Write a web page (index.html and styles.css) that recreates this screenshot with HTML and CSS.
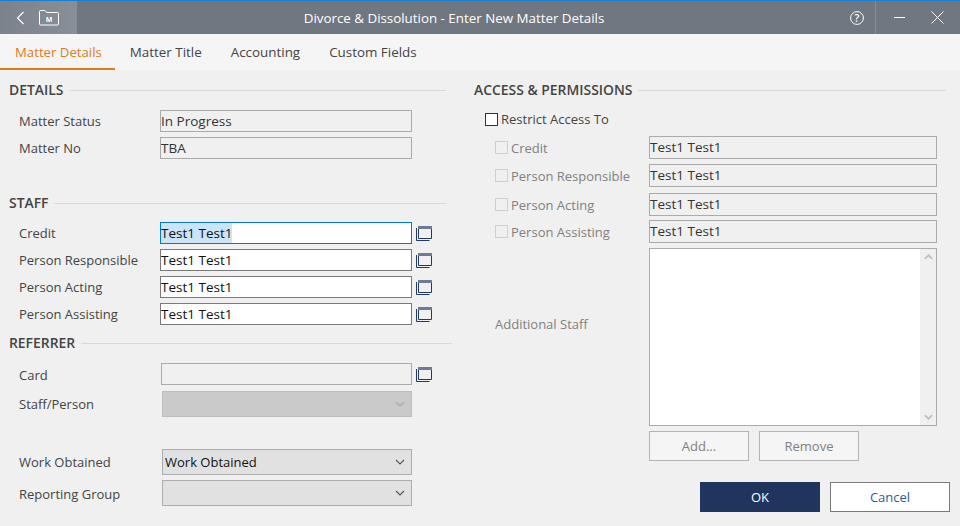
FILE: index.html
```html
<!DOCTYPE html>
<html lang="en">
<head>
    <meta charset="UTF-8">
    <meta name="viewport" content="width=device-width, initial-scale=1.0">
    <title>Divorce &amp; Dissolution - Enter New Matter Details</title>
    <link rel="stylesheet" href="styles.css">
</head>
<body>
    <svg class="defs" width="0" height="0">
        <symbol id="popup" viewBox="0 0 16 16">
            <path d="M2.5 1.5h13v12h-13z" fill="none" stroke="#1f3864"/>
            <path d="M2 1h14v3H2z" fill="#6d7b99"/>
            <path d="M.5 3v12.5h13" fill="none" stroke="#1f3864"/>
        </symbol>
        <symbol id="chev" viewBox="0 0 10 6">
            <path d="M1 1l4 4 4-4" fill="none" stroke="currentColor"/>
        </symbol>
    </svg>

    <header class="titlebar">
        <div class="nav">
            <svg class="back" width="9" height="14" viewBox="0 0 9 14"><path d="M7.5 1L1.5 7l6 6" fill="none" stroke="#fff" stroke-width="1.2"/></svg>
            <svg class="folder" width="20" height="16" viewBox="0 0 20 16">
                <path d="M.5 14V1.5a1 1 0 0 1 1-1h4.5l1.5 2h11a1 1 0 0 1 1 1V14a1 1 0 0 1-1 1h-17a1 1 0 0 1-1-1z" fill="none" stroke="#fff"/>
                <text x="10" y="12" text-anchor="middle" class="folder-m">M</text>
            </svg>
        </div>
        <div class="title">Divorce &amp; Dissolution - Enter New Matter Details</div>
        <div class="help">
            <svg width="14" height="14" viewBox="0 0 14 14">
                <circle cx="7" cy="7" r="6.4" fill="none" stroke="#fff"/>
                <text x="7" y="10.5" text-anchor="middle" class="help-q">?</text>
            </svg>
        </div>
        <div class="winbtns">
            <svg width="11" height="1" viewBox="0 0 11 1"><path d="M0 0h11v1H0z" fill="#fff"/></svg>
            <svg width="13" height="13" viewBox="0 0 13 13"><path d="M.5.5l12 12M12.5.5l-12 12" stroke="#fff" fill="none"/></svg>
        </div>
    </header>

    <nav class="tabs">
        <a class="tab active">Matter Details</a>
        <a class="tab">Matter Title</a>
        <a class="tab">Accounting</a>
        <a class="tab">Custom Fields</a>
    </nav>

    <main class="content">
        <div class="col-left">
            <h2 class="heading">DETAILS</h2>
            <div class="rows rows-details">
                <div class="row"><label>Matter Status</label><div class="field readonly">In Progress</div></div>
                <div class="row"><label>Matter No</label><div class="field readonly">TBA</div></div>
            </div>

            <h2 class="heading heading-staff">STAFF</h2>
            <div class="rows rows-staff">
                <div class="row"><label>Credit</label><div class="field focus"><span class="sel">Test1 Test1</span></div><svg class="pick"><use href="#popup"/></svg></div>
                <div class="row"><label>Person Responsible</label><div class="field">Test1 Test1</div><svg class="pick"><use href="#popup"/></svg></div>
                <div class="row"><label>Person Acting</label><div class="field">Test1 Test1</div><svg class="pick"><use href="#popup"/></svg></div>
                <div class="row"><label>Person Assisting</label><div class="field">Test1 Test1</div><svg class="pick"><use href="#popup"/></svg></div>
            </div>

            <h2 class="heading heading-ref">REFERRER</h2>
            <div class="row row-card"><label>Card</label><div class="field readonly card"></div><svg class="pick"><use href="#popup"/></svg></div>
            <div class="row row-select row-person"><label>Staff/Person</label><div class="select disabled"><span></span><svg class="caret"><use href="#chev"/></svg></div></div>
            <div class="row row-select row-work"><label>Work Obtained</label><div class="select"><span>Work Obtained</span><svg class="caret"><use href="#chev"/></svg></div></div>
            <div class="row row-select row-group"><label>Reporting Group</label><div class="select"><span></span><svg class="caret"><use href="#chev"/></svg></div></div>
        </div>

        <div class="col-right">
            <h2 class="heading">ACCESS &amp; PERMISSIONS</h2>
            <div class="restrict"><span class="check"></span>Restrict Access To</div>
            <div class="access-rows">
                <div class="access"><label><span class="check off"></span>Credit</label><div class="field readonly">Test1 Test1</div></div>
                <div class="access"><label><span class="check off"></span>Person Responsible</label><div class="field readonly">Test1 Test1</div></div>
                <div class="access tall"><label><span class="check off"></span>Person Acting</label><div class="field readonly">Test1 Test1</div></div>
                <div class="access"><label><span class="check off"></span>Person Assisting</label><div class="field readonly">Test1 Test1</div></div>
            </div>
            <div class="additional">
                <label>Additional Staff</label>
                <div class="listbox">
                    <div class="scroll">
                        <svg class="up"><use href="#chev"/></svg>
                        <svg class="down"><use href="#chev"/></svg>
                    </div>
                </div>
            </div>
            <div class="list-btns">
                <button class="btn-small">Add...</button>
                <button class="btn-small">Remove</button>
            </div>
            <div class="actions">
                <button class="btn primary">OK</button>
                <button class="btn">Cancel</button>
            </div>
        </div>
    </main>
</body>
</html>
```

FILE: styles.css
```css
* {
    box-sizing: border-box;
}
html, body {
    margin: 0;
    height: 526px;
    overflow: hidden;
}
body {
    font-family: "Open Sans", "Noto Sans", sans-serif;
    font-size: 13px;
    color: #444;
    background-color: #f0f0f0;
}
.defs {
    display: block;
    height: 0;
}

/* title bar */
.titlebar {
    height: 34px;
    display: flex;
    align-items: center;
    background-color: #6f7780;
    border-top: 1px solid #1a7fd0;
    color: white;
}
.nav {
    width: 77px;
    height: 33px;
    display: flex;
    align-items: center;
    padding-left: 16px;
    gap: 14px;
    background: linear-gradient(to right, #7b828b, #888f97);
}
.folder-m {
    font-size: 7px;
    font-weight: bold;
    fill: white;
}
.title {
    flex: 1;
    text-align: center;
    font-size: 13.35px;
    padding-right: 19px;
}
.help {
    width: 25px;
    height: 33px;
    display: flex;
    align-items: center;
}
.help-q {
    font-size: 10.5px;
    font-weight: 600;
    fill: white;
}
.winbtns {
    width: 85px;
    height: 33px;
    display: flex;
    align-items: center;
    padding-left: 18px;
    gap: 26px;
    border-left: 1px solid #858c94;
}

/* tabs */
.tabs {
    height: 36px;
    display: flex;
    background-color: #f5f5f5;
}
.tab {
    padding: 0 14px 0 15px;
    line-height: 36px;
    font-size: 13.4px;
    color: #444;
}
.tab.active {
    padding-right: 13px;
    font-size: 13.2px;
    color: #e07a1f;
    border-bottom: 2px solid #e07a1f;
}

/* form columns */
.content {
    display: flex;
    height: 456px;
}
.col-left {
    width: 474px;
    padding-left: 9px;
}
.col-right {
    flex: 1;
    padding-right: 14px;
}
.heading {
    display: flex;
    align-items: center;
    gap: 6px;
    height: 20px;
    margin: 9px 0 0;
    font-size: 13.9px;
    font-weight: 600;
    color: #444;
}
.heading::after {
    content: "";
    flex: 1;
    height: 1px;
    margin-top: 2px;
    background-color: #d9d9d9;
}
.col-left .heading {
    margin-right: 28px;
}
.heading-staff {
    margin-top: 33px;
}
.col-left .heading-ref {
    margin: 7px 22px 0 0;
}

.rows {
    display: flex;
    flex-direction: column;
    gap: 5px;
}
.rows-details {
    margin-top: 11px;
}
.rows-staff {
    margin-top: 10px;
}
.row {
    display: flex;
    align-items: center;
    height: 22px;
    padding-left: 10px;
}
.row label {
    width: 141px;
    flex: none;
}
.row-card label,
.row-group label {
    padding-top: 2px;
}
.field {
    height: 22px;
    width: 252px;
    padding: 0 1px 0 0;
    line-height: 20px;
    font-size: 13.5px;
    color: #111;
    background: white;
    border: 1px solid #7a7a7a;
}
.field.focus {
    border-color: #0078d7;
}
.sel {
    display: inline-block;
    height: 20px;
    background-color: #cce4f7;
}
.field.readonly {
    color: #333;
    background: #f0f0f0;
    border-color: #ababab;
}
.field.card {
    width: 251px;
    margin-left: 1px;
}
.pick {
    width: 16px;
    height: 16px;
    margin-left: 4px;
}
.row-card {
    margin-top: 11px;
}
.row-select {
    height: 26px;
}
.row-person {
    margin-top: 6px;
}
.row-work {
    margin-top: 32px;
}
.row-group {
    margin-top: 5px;
}
.select {
    width: 250px;
    height: 26px;
    margin-left: 2px;
    padding: 0 6px 0 2px;
    display: flex;
    align-items: center;
    justify-content: space-between;
    color: #111;
    background-color: #e1e1e1;
    border: 1px solid #adadad;
}
.select.disabled {
    background-color: #cacaca;
    border-color: #bdbdbd;
    color: #a0a0a0;
}
.caret {
    width: 10px;
    height: 6px;
    color: #555;
    stroke-width: 1.1;
}
.select.disabled .caret {
    color: #a8a8a8;
}

/* access panel */
.restrict {
    display: flex;
    align-items: center;
    height: 18px;
    margin: 11px 0 0 11px;
    color: #444;
}
.check {
    width: 13px;
    height: 13px;
    margin-right: 3px;
    background: white;
    border: 1px solid #333;
    flex: none;
}
.check.off {
    background: #f0f0f0;
    border-color: #cfcfcf;
}
.access-rows {
    display: flex;
    flex-direction: column;
    margin-top: 8px;
}
.access {
    display: flex;
    align-items: center;
    height: 23px;
    margin-bottom: 5px;
}
.access.tall {
    margin-top: 1px;
}
.access + .access.tall + .access {
    margin-top: -1px;
}
.access label {
    width: 175px;
    padding-left: 21px;
    display: flex;
    align-items: center;
    color: #808080;
}
.access .field {
    width: 288px;
    height: 23px;
}
.additional {
    display: flex;
    align-items: center;
}
.additional label {
    width: 175px;
    padding-left: 21px;
    margin-bottom: 26px;
    color: #808080;
}
.listbox {
    width: 288px;
    height: 178px;
    background: white;
    border: 1px solid #ababab;
    display: flex;
    justify-content: flex-end;
}
.scroll {
    width: 16px;
    background-color: #f0f0f0;
    display: flex;
    flex-direction: column;
    justify-content: space-between;
    align-items: center;
    padding: 5px 0;
    color: #bdbdbd;
}
.scroll svg {
    width: 9px;
    height: 6px;
    stroke-width: 2;
}
.scroll .up {
    transform: scaleY(-1);
}
.list-btns {
    display: flex;
    gap: 10px;
    margin: 5px 0 0 175px;
}
.btn-small {
    width: 100px;
    height: 30px;
    padding: 0;
    font: inherit;
    color: #808080;
    background-color: #f5f5f5;
    border: 1px solid #b4b4b4;
}
.actions {
    display: flex;
    justify-content: flex-end;
    gap: 10px;
    margin: 21px -4px 0 0;
}
.btn {
    width: 120px;
    height: 30px;
    padding: 0;
    font: inherit;
    color: #1f5f99;
    background: white;
    border: 1px solid #7a7a7a;
}
.btn.primary {
    color: white;
    background-color: #1f355e;
    border-color: #1f355e;
}
```
